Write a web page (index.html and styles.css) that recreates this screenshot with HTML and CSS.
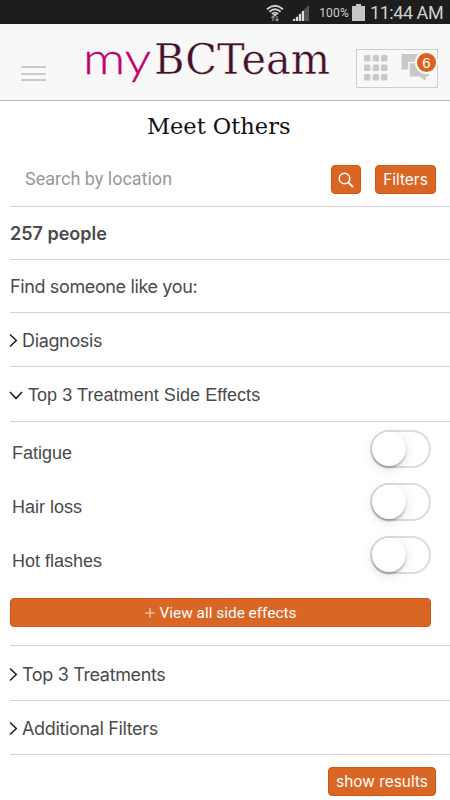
FILE: index.html
```
<!DOCTYPE html>
<html lang="en">
<head>
  <meta charset="UTF-8">
  <meta name="viewport" content="width=device-width, initial-scale=1">
  <title>myBCTeam - Meet Others</title>
  <link rel="stylesheet" href="styles.css">
</head>
<body>
  <div class="status-bar">
    <svg class="wifi" width="18" height="18" viewBox="0 0 18 18">
      <g fill="none" stroke="#d0d0d0" stroke-width="1.8">
        <path d="M1 5.2Q9-1.6 17 5.2"/>
        <path d="M3.4 7.7Q9 2.9 14.6 7.7"/>
        <path d="M5.8 10Q9 7.3 12.2 10"/>
      </g>
      <path d="M7 10.5Q9 9 11 10.5L9 12.8z" fill="#d0d0d0"/>
      <path d="M7 17V12M5.3 14L7 12l1.7 2M11 12v5M9.3 15L11 17l1.7-2" fill="none" stroke="#999" stroke-width="1.1"/>
    </svg>
    <svg class="signal" width="17" height="16" viewBox="0 0 17 16">
      <path d="M0 16L17 0V16z" fill="#555"/>
      <path d="M1 16v-2h2v2zM4 16v-4h2v4zM7 16v-7h2v7zM10 16V6h2v10z" fill="#ddd"/>
    </svg>
    <span class="battery-text">100%</span>
    <svg class="battery" width="13" height="17" viewBox="0 0 13 17">
      <path d="M4 0h5v2h4v15H0V2h4z" fill="#c6c6c6"/>
    </svg>
    <span class="clock">11:44 AM</span>
  </div>

  <header class="header">
    <div class="menu">
      <span></span>
      <span></span>
      <span></span>
    </div>
    <svg class="logo" width="250" height="72" viewBox="0 0 250 72">
      <text class="logo-my" x="-1" y="48" textLength="68" lengthAdjust="spacingAndGlyphs">my</text>
      <text class="logo-team" x="70" y="48" textLength="176" lengthAdjust="spacingAndGlyphs">BCTeam</text>
    </svg>
    <div class="tools">
      <svg width="24" height="27" viewBox="0 0 24 27" fill="#c9c9c9">
        <rect x="0" y="0" width="6.5" height="6.5" rx="1.5"/>
        <rect x="8.6" y="0" width="6.5" height="6.5" rx="1.5"/>
        <rect x="17" y="0" width="6.5" height="6.5" rx="1.5"/>
        <rect x="0" y="9.5" width="6.5" height="6.5" rx="1.5"/>
        <rect x="8.6" y="9.5" width="6.5" height="6.5" rx="1.5"/>
        <rect x="17" y="9.5" width="6.5" height="6.5" rx="1.5"/>
        <rect x="0" y="19" width="6.5" height="6.5" rx="1.5"/>
        <rect x="8.6" y="19" width="6.5" height="6.5" rx="1.5"/>
        <rect x="17" y="19" width="6.5" height="6.5" rx="1.5"/>
      </svg>
      <svg width="29" height="29" viewBox="0 0 29 29">
        <path d="M-.5-1h18v15.5h-18z" fill="#c9c9c9"/>
        <path d="M7 7.5h20.5v14.8H24.5v5l-7-5H7z" fill="#c9c9c9" stroke="#f8f8f8" stroke-width="1.5"/>
      </svg>
      <span class="badge">6</span>
    </div>
  </header>

  <h1>Meet Others</h1>

  <main>
    <div class="search">
      <input type="text" placeholder="Search by location">
      <button class="btn btn-search">
        <svg width="16" height="16" viewBox="0 0 16 16" fill="none" stroke="#fff" stroke-width="1.4">
          <circle cx="6.5" cy="6.5" r="5.3"/>
          <path d="M10.3 10.3L15 15" stroke-width="1.8"/>
        </svg>
      </button>
      <button class="btn btn-filters">Filters</button>
    </div>

    <div class="row count"><span>257 people</span></div>
    <div class="row find"><span>Find someone like you:</span></div>
    <div class="row toggle diagnosis">
      <svg width="9" height="15" viewBox="0 0 9 15"><path d="M1 1.5L7.3 7.5L1 13.5"/></svg>
      <span>Diagnosis</span>
    </div>
    <div class="row toggle open">
      <svg width="14" height="9" viewBox="0 0 14 9"><path d="M1 1L7 7.5L13 1"/></svg>
      <span>Top 3 Treatment Side Effects</span>
    </div>

    <div class="effects">
      <div class="effect"><span class="fatigue">Fatigue</span><i class="switch"></i></div>
      <div class="effect"><span class="hair">Hair loss</span><i class="switch"></i></div>
      <div class="effect"><span class="flashes">Hot flashes</span><i class="switch"></i></div>
      <button class="btn btn-all">
        <svg width="10" height="10" viewBox="0 0 10 10"><path d="M5 0v10M0 5h10" stroke="#fff" stroke-width=".8"/></svg>
        <span>View all side effects</span>
      </button>
    </div>

    <div class="row toggle treatments">
      <svg width="9" height="15" viewBox="0 0 9 15"><path d="M1 1.5L7.3 7.5L1 13.5"/></svg>
      <span>Top 3 Treatments</span>
    </div>
    <div class="row toggle additional">
      <svg width="9" height="15" viewBox="0 0 9 15"><path d="M1 1.5L7.3 7.5L1 13.5"/></svg>
      <span>Additional Filters</span>
    </div>
    <div class="results">
      <button class="btn btn-results">show results</button>
    </div>
  </main>
</body>
</html>
```
FILE: styles.css
```
* {
  box-sizing: border-box;
}

body {
  margin: 0;
  height: 800px;
  overflow: hidden;
  background: #fff;
  color: #4a4a4a;
  font-family: Inter, "Liberation Sans", sans-serif;
  font-size: 18px;
}

span,
button {
  white-space: nowrap;
}

.status-bar {
  height: 24px;
  display: flex;
  align-items: center;
  justify-content: flex-end;
  background: #1d1d1d;
  color: #d0d0d0;
  font-family: Roboto, sans-serif;
  padding-right: 7px;
}

.wifi {
  margin: 2px 8px 0 0;
}

.signal {
  margin: 1px 10px 0 0;
}

.battery-text {
  font-size: 12px;
  letter-spacing: 0.2px;
  margin: 1px 3px 0 0;
}

.battery {
  margin-right: 5px;
}

.clock {
  font-size: 18px;
  letter-spacing: -0.45px;
  width: 73px;
}

.header {
  height: 77px;
  display: flex;
  background: #f8f8f8;
  border-bottom: 1px solid #b5b5b5;
}

.menu {
  width: 25px;
  height: 15px;
  margin: 42px 38px 0 21px;
  display: flex;
  flex-direction: column;
  justify-content: space-between;
}

.menu span {
  height: 2px;
  background: #cbcbcb;
}

.logo {
  margin-top: 2px;
}

.logo-my {
  font-family: Lato, sans-serif;
  font-weight: 300;
  font-size: 43px;
  fill: #c4006e;
  stroke: #c4006e;
  stroke-width: 0.3px;
}

.logo-team {
  font-family: "DejaVu Serif", serif;
  font-size: 42px;
  fill: #451029;
  stroke: #f8f8f8;
  stroke-width: 0.4px;
}

.tools {
  position: relative;
  width: 82px;
  height: 39px;
  margin: 25px 0 0 22px;
  padding: 5px 7px;
  display: flex;
  gap: 14px;
  border: 1px solid #cecece;
}

.tools svg {
  flex: none;
  overflow: visible;
}

.badge {
  position: absolute;
  left: 58px;
  top: 1px;
  width: 23px;
  height: 23px;
  border: 2px solid #f8f8f8;
  border-radius: 50%;
  background: #da621e;
  color: #fff;
  font: 15px/19px "Liberation Sans", sans-serif;
  text-align: center;
}

h1 {
  margin: 0;
  height: 51px;
  padding-left: 147px;
  line-height: 50px;
  font-family: "DejaVu Serif", serif;
  font-weight: normal;
  font-size: 22.5px;
  color: #111;
  white-space: nowrap;
}

main {
  padding-left: 10px;
}

.search {
  height: 55px;
  display: flex;
  align-items: flex-start;
  padding: 13px 14px 0 15px;
  border-bottom: 1px solid #d4d4d4;
}

.search input {
  flex: 1;
  min-width: 0;
  height: 26px;
  padding: 0;
  border: 0;
  outline: none;
  background: none;
  font: 18px Roboto, sans-serif;
}

.search input::placeholder {
  color: #999;
}

.btn {
  display: flex;
  align-items: center;
  justify-content: center;
  height: 29px;
  padding: 0;
  border: 1px solid #cf5513;
  border-radius: 4px;
  background: #da6626;
  color: #fff;
  font-family: Inter, sans-serif;
  font-size: 15.4px;
}

.btn-search {
  width: 30px;
  margin-right: 14px;
}

.btn-filters {
  width: 61px;
}

.row {
  height: 53px;
  display: flex;
  align-items: center;
  border-bottom: 1px solid #d4d4d4;
}

.count {
  font-weight: 600;
}

.find {
  letter-spacing: -0.37px;
}

.toggle {
  height: 55px;
  gap: 4px;
  padding-top: 2px;
  letter-spacing: -0.35px;
}

.toggle svg {
  fill: none;
  stroke: #222;
  stroke-width: 1.6;
  margin-left: -1px;
}

.diagnosis {
  height: 54px;
}

.open,
.effect {
  font-family: "Liberation Sans", Arial, sans-serif;
}

.open {
  gap: 5px;
  padding-top: 3px;
  letter-spacing: 0.05px;
}

.effects {
  height: 224px;
  padding: 8px 19px 0 0;
  border-bottom: 1px solid #d4d4d4;
}

.effect {
  height: 53px;
  display: flex;
  align-items: flex-start;
  justify-content: space-between;
  padding-left: 2px;
}

.effect span {
  margin-top: 13px;
}

.effect .hair {
  margin-top: 14px;
}

.effect .flashes {
  margin-top: 15px;
}

.switch {
  width: 61px;
  height: 38px;
  border: 2px solid #ddd;
  border-radius: 19px;
}

.switch::before {
  content: "";
  display: block;
  width: 34px;
  height: 34px;
  border-radius: 50%;
  background: #fff;
  box-shadow: 0 2px 2px rgba(0, 0, 0, 0.25), 0 3px 12px rgba(0, 0, 0, 0.12);
}

.btn-all {
  width: 421px;
  margin-top: 9px;
  gap: 5px;
  font-family: Roboto, sans-serif;
}

.additional {
  height: 54px;
}

.results {
  display: flex;
  justify-content: flex-end;
  padding: 12px 14px 0 0;
}

.btn-results {
  width: 108px;
}
```
